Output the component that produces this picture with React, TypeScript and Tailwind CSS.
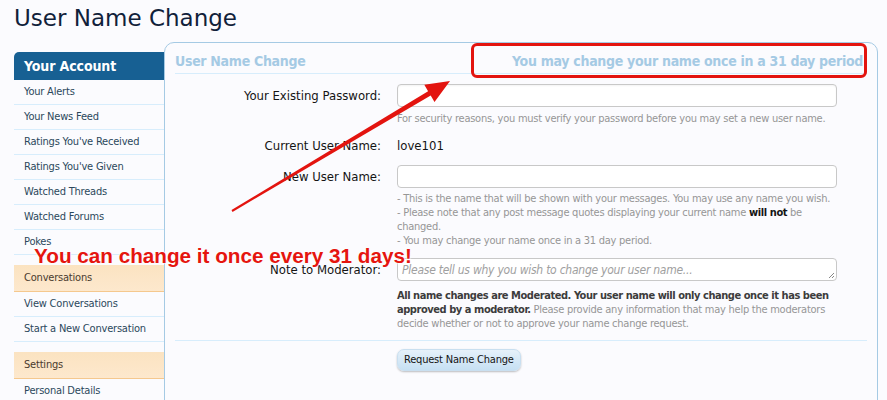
import React from "react";

const font = "font-['DejaVu_Sans_Condensed','DejaVu_Sans',sans-serif]";

function SideItem({ label }: { label: string }) {
  return (
    <div className="h-[25px] border-b border-[#d7edfc] pl-[10px] flex items-center text-[11px] tracking-[-0.2px] text-[#2b485c]">
      {label}
    </div>
  );
}

function SideHeader({ label }: { label: string }) {
  return (
    <div className="h-[27px] border-b border-[#f5c88e] bg-gradient-to-b from-[#fbe3c1] to-[#fde8cd] pl-[10px] flex items-center text-[11px] tracking-[-0.2px] text-[#4a3b2e]">
      {label}
    </div>
  );
}

export default function App() {
  return (
    <div className={`relative w-[887px] h-[400px] overflow-hidden bg-[#fbfbfe] ${font}`}>
      <h1 className="pl-[14px] pt-[4px] h-[42px] text-[23px] leading-[28px] text-[#10213a] font-['DejaVu_Sans',sans-serif]">User Name Change</h1>
      <div className="flex pl-[14px] pr-[9px]">
        <div className="w-[150px] shrink-0 mt-[10px]">
          <div className="h-[28px] bg-[#176093] rounded-tl-[5px] pl-[10px] flex items-center text-white font-bold text-[14px] tracking-[-0.1px]">
            Your Account
          </div>
          <SideItem label="Your Alerts" />
          <SideItem label="Your News Feed" />
          <SideItem label="Ratings You've Received" />
          <SideItem label="Ratings You've Given" />
          <SideItem label="Watched Threads" />
          <SideItem label="Watched Forums" />
          <SideItem label="Pokes" />
          <div className="h-[10px]" />
          <SideHeader label="Conversations" />
          <SideItem label="View Conversations" />
          <SideItem label="Start a New Conversation" />
          <div className="h-[10px]" />
          <SideHeader label="Settings" />
          <SideItem label="Personal Details" />
        </div>
        <div className="flex-1 h-[380px] border border-[#a5cae4] rounded-[10px] bg-[#fbfbfe] px-[10px] pt-[10px]">
          <div className="flex justify-between items-end h-[21px] border-b border-[#d7edfc] pb-[1px] text-[14px] font-bold tracking-[-0.3px] text-[#a5cae4]">
            <span>User Name Change</span>
            <span className="pr-[4px]">You may change your name once in a 31 day period</span>
          </div>
          <div className="grid grid-cols-[206px_440px] gap-x-[16px] text-[13px] text-[#141414]">
            {/* Row 1 */}
            <div className="mt-[10px] h-[23px] flex items-center justify-end">Your Existing Password:</div>
            <div className="mt-[10px]">
              <div className="h-[23px] rounded-[4px] border border-[#c8c8c8] bg-white shadow-[inset_0_1px_2px_rgba(0,0,0,0.05)]" />
              <div className="mt-[5px] text-[11px] leading-[14px] tracking-[-0.25px] text-[#969696]">
                For security reasons, you must verify your password before you may set a new user name.
              </div>
            </div>
            {/* Row 2 */}
            <div className="mt-[12px] h-[16px] flex items-center justify-end">Current User Name:</div>
            <div className="mt-[12px] h-[16px] flex items-center">love101</div>
            {/* Row 3 */}
            <div className="mt-[11px] h-[23px] flex items-center justify-end">New User Name:</div>
            <div className="mt-[11px]">
              <div className="h-[23px] rounded-[4px] border border-[#c8c8c8] bg-white" />
              <div className="mt-[4px] text-[11px] leading-[14px] tracking-[-0.25px] text-[#969696]">
                <div>- This is the name that will be shown with your messages. You may use any name you wish.</div>
                <div>
                  - Please note that any post message quotes displaying your current name{" "}
                  <b className="text-[#141414] tracking-[-0.4px]">will not</b> be changed.
                </div>
                <div>- You may change your name once in a 31 day period.</div>
              </div>
            </div>
            {/* Row 4 */}
            <div className="mt-[10px] h-[23px] flex items-center justify-end">Note to Moderator:</div>
            <div className="mt-[10px]">
              <div className="relative h-[23px] rounded-[4px] border border-[#c8c8c8] bg-white px-[4px] flex items-center italic text-[12px] text-[#a0a0a0] tracking-[-0.25px]">
                Please tell us why you wish to change your user name...
                <svg className="absolute right-[1px] bottom-[1px]" width="7" height="7" viewBox="0 0 7 7">
                  <path d="M1 6L6 1M4 6L6 4" stroke="#888" strokeWidth="1" />
                </svg>
              </div>
              <div className="mt-[8px] text-[11px] leading-[14px] tracking-[-0.25px] text-[#969696]">
                <b className="text-[#3c3c3c] tracking-[-0.45px]">
                  All name changes are Moderated. Your user name will only change once it has been approved by a moderator.
                </b>{" "}
                Please provide any information that may help the moderators decide whether or not to approve your name change request.
              </div>
            </div>
          </div>
          <div className="mt-[9px] border-b border-[#d7edfc]" />
          <div className="pl-[222px] pt-[5px]">
            <button className="h-[22px] px-[6px] rounded-[7px] border border-[#c9dff0] bg-gradient-to-b from-[#e6f1fa] to-[#c6e0f3] shadow-[0_1px_2px_rgba(0,0,0,0.25)] text-[11px] tracking-[-0.2px] text-[#141414]">
              Request Name Change
            </button>
          </div>
        </div>
      </div>

      {/* annotations */}
      <div className="absolute left-[471px] top-[43px] w-[396px] h-[35px] border-[3px] border-[#e3140f] rounded-[6px]" />
      <svg className="absolute left-0 top-0" width="887" height="400" viewBox="0 0 887 400">
        <polygon points="232.5,211.9 231.5,210.1 428.1,91.2 424.3,84.7 450,81 434.5,101.9 430.7,95.4" fill="#e3140f" />
      </svg>
      <div className="absolute left-[34px] top-[244px] font-['Liberation_Sans',Arial,sans-serif] font-bold text-[20.7px] leading-[24px] text-[#e5150f] [text-shadow:0_0_2px_#fff,0_0_2px_#fff,0_0_2px_#fff]">
        You can change it once every 31 days!
      </div>
    </div>
  );
}
